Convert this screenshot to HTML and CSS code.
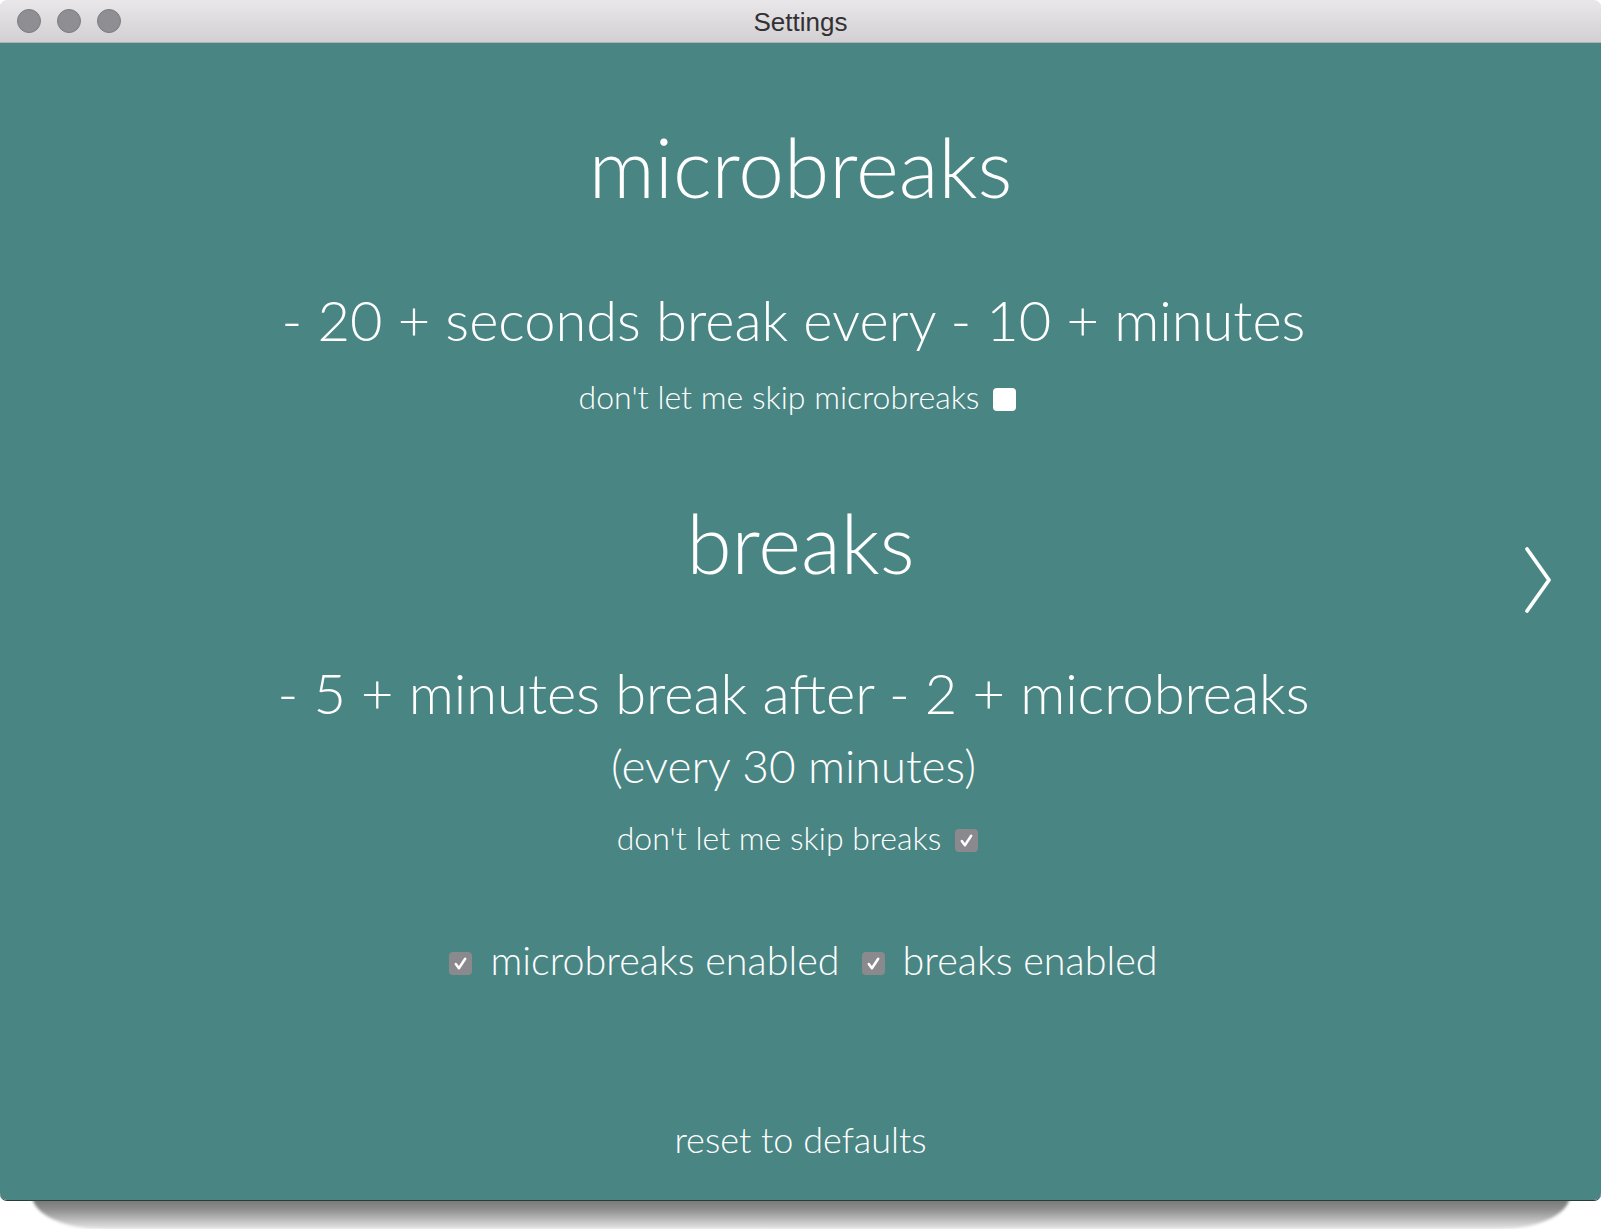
FILE: index.html
```html
<!DOCTYPE html>
<html>
<head>
<meta charset="utf-8">
<link rel="stylesheet" href="styles.css">
</head>
<body>
<div class="page">
<div class="window">
  <div class="titlebar">
    <div class="lights"><span class="light"></span><span class="light"></span><span class="light"></span></div>
    <div class="title">Settings</div>
  </div>
  <div class="content">
    <h1 class="heading h-micro">microbreaks</h1>
    <div class="setting s-micro"><span>- 20 + seconds break every - 10 + minutes</span></div>
    <div class="skip skip-micro"><span>don't let me skip microbreaks</span><span class="box box-empty"></span></div>
    <h1 class="heading h-breaks">breaks</h1>
    <div class="setting s-breaks"><span>- 5 + minutes break after - 2 + microbreaks</span></div>
    <div class="every">(every 30 minutes)</div>
    <div class="skip skip-breaks"><span>don't let me skip breaks</span><span class="box box-checked"><svg viewBox="0 0 22 22"><path d="M6.5 11.5 L9.5 15.5 L15.5 6.5" fill="none" stroke="#fff" stroke-width="2.4" stroke-linecap="round" stroke-linejoin="round"/></svg></span></div>
    <div class="enabled">
      <span class="box box-checked"><svg viewBox="0 0 22 22"><path d="M6.5 11.5 L9.5 15.5 L15.5 6.5" fill="none" stroke="#fff" stroke-width="2.4" stroke-linecap="round" stroke-linejoin="round"/></svg></span><span class="label">microbreaks enabled</span>
      <span class="box box-checked"><svg viewBox="0 0 22 22"><path d="M6.5 11.5 L9.5 15.5 L15.5 6.5" fill="none" stroke="#fff" stroke-width="2.4" stroke-linecap="round" stroke-linejoin="round"/></svg></span><span class="label">breaks enabled</span>
    </div>
    <div class="reset">reset to defaults</div>
    <svg class="chevron" viewBox="0 0 30 70"><path d="M4 4 L26 35 L4 66" fill="none" stroke="#fff" stroke-width="3.8" stroke-linecap="round" stroke-linejoin="round"/></svg>
  </div>
</div>
<div class="shadow"></div>
</div>
</body>
</html>
```

FILE: styles.css
```css
html, body {
  margin: 0;
  padding: 0;
  background: #ffffff;
}
.page {
  width: 1602px;
  height: 1229px;
  position: relative;
  overflow: hidden;
}
.window {
  width: 1601px;
  height: 1200px;
  border-radius: 7px;
  overflow: hidden;
  box-shadow: 0 1px 0 #2e3a3a;
  display: flex;
  flex-direction: column;
  position: relative;
  z-index: 1;
}
.shadow {
  position: absolute;
  left: 32px;
  right: 32px;
  top: 1170px;
  height: 59px;
  border-radius: 0 0 70px 70px / 0 0 34px 34px;
  background: linear-gradient(#7a7a7a 0, #7a7a7a 31px, #8a8a8a 38px, #a6a6a6 45px, #c2c2c2 51px, #d8d8d8 56px, #e4e4e4 59px);
  filter: blur(1.5px);
}
.titlebar {
  height: 42px;
  border-bottom: 1px solid #b3b1b3;
  background: linear-gradient(#e9e7e9, #d2d0d2);
  display: flex;
  align-items: center;
  position: relative;
}
.lights {
  display: flex;
  gap: 16px;
  padding-left: 17px;
}
.light {
  width: 22px;
  height: 22px;
  border-radius: 50%;
  background: #8f8e92;
  border: 1px solid #7d7c80;
}
.title {
  position: absolute;
  left: 0;
  right: 0;
  top: 6px;
  text-align: center;
  font-family: "Liberation Sans", Arial, sans-serif;
  font-size: 26px;
  line-height: 32px;
  color: #333133;
}
.content {
  flex: 1;
  background: #498583;
  color: #ffffff;
  font-family: Lato, "Open Sans", sans-serif;
  font-weight: 300;
  display: flex;
  flex-direction: column;
  align-items: center;
  position: relative;
}
.heading {
  margin: 0;
  font-weight: 300;
  font-size: 82px;
  line-height: 96px;
}
.h-micro { margin-top: 75px; }
.setting {
  font-size: 56px;
  line-height: 68px;
  padding-right: 14px;
}
.s-micro { margin-top: 72px; }
.skip {
  font-size: 32px;
  line-height: 40px;
  display: flex;
  align-items: center;
  gap: 14px;
  padding-right: 6px;
}
.skip-micro { margin-top: 23px; }
.h-breaks { margin-top: 77px; }
.s-breaks { margin-top: 69px; }
.every {
  margin-top: 9px;
  font-size: 46px;
  line-height: 60px;
  padding-right: 14px;
}
.skip-breaks { margin-top: 22px; }
.skip .box { margin-top: 4px; }
.box {
  width: 23px;
  height: 23px;
  border-radius: 4px;
  display: inline-flex;
  flex: none;
}
.box svg { width: 23px; height: 23px; }
.box-empty { background: #ffffff; }
.box-checked { background: #8a898e; }
.enabled {
  margin-top: 77px;
  font-size: 39.5px;
  line-height: 50px;
  display: flex;
  align-items: center;
  padding-left: 6px;
}
.enabled .box { margin-top: 6px; }
.enabled .label { margin-left: 18px; margin-right: 22px; }
.enabled .label:last-child { margin-right: 0; }
.reset {
  margin-top: 132px;
  font-size: 36px;
  line-height: 44px;
}
.chevron {
  position: absolute;
  right: 48px;
  top: 502px;
  width: 30px;
  height: 70px;
}
```
